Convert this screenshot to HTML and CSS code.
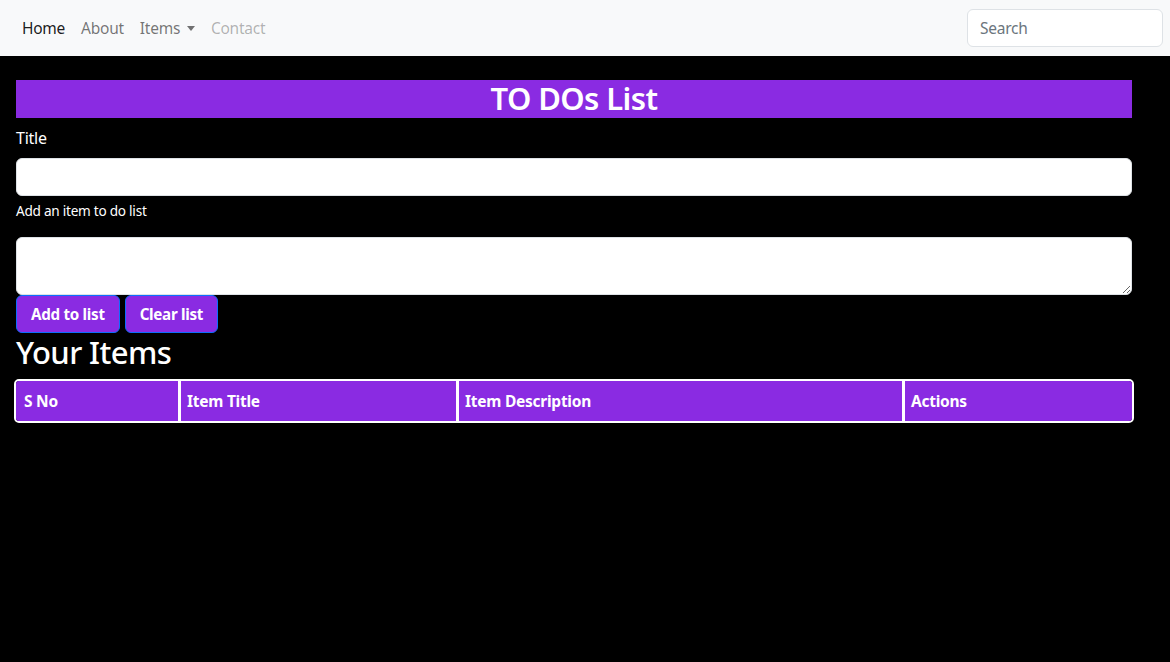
FILE: index.html
```html
<!DOCTYPE html>
<html lang="en">
<head>
<meta charset="utf-8">
<title>TO DOs List</title>
<link rel="stylesheet" href="styles.css">
</head>
<body>
<nav class="navbar">
  <ul class="nav-links">
    <li><a class="nav-link active" href="#">Home</a></li>
    <li><a class="nav-link" href="#">About</a></li>
    <li><a class="nav-link dropdown" href="#">Items <span class="caret"></span></a></li>
    <li><a class="nav-link disabled" href="#">Contact</a></li>
  </ul>
  <input class="search" type="search" placeholder="Search">
</nav>
<main class="page">
  <h2 class="banner">TO DOs List</h2>
  <label class="form-label" for="title">Title</label>
  <input class="form-control" id="title" type="text">
  <div class="form-text">Add an item to do list</div>
  <textarea class="form-control area" id="desc"></textarea>
  <div class="buttons">
    <button class="btn">Add to list</button>
    <button class="btn">Clear list</button>
  </div>
  <h2 class="section-title">Your Items</h2>
  <table class="items">
    <thead>
      <tr>
        <th class="c1">S No</th>
        <th class="c2">Item Title</th>
        <th class="c3">Item Description</th>
        <th class="c4">Actions</th>
      </tr>
    </thead>
    <tbody></tbody>
  </table>
</main>
</body>
</html>
```

FILE: styles.css
```css
* { box-sizing: border-box; }
html, body { margin: 0; padding: 0; }
body {
  background: #000;
  color: #fff;
  font-family: "Noto Sans", "Open Sans", "Liberation Sans", sans-serif;
  font-size: 16px;
  line-height: 1.5;
  letter-spacing: -0.25px;
  height: 662px;
  overflow: hidden;
}
.navbar {
  height: 56px;
  background: #f8f9fa;
  display: flex;
  align-items: center;
  justify-content: space-between;
  padding: 0 7px 0 14px;
}
.nav-links {
  list-style: none;
  margin: 0;
  padding: 0;
  display: flex;
}
.nav-link {
  display: block;
  padding: 9px 8px 7px;
  text-decoration: none;
  color: rgba(0,0,0,.55);
  font-size: 15.5px;
}
.nav-link.active { color: rgba(0,0,0,.9); }
.nav-link.disabled { color: rgba(0,0,0,.3); }
.caret {
  display: inline-block;
  width: 0; height: 0;
  margin-left: 3px;
  vertical-align: 3px;
  border-top: 5px solid rgba(0,0,0,.55);
  border-left: 4.5px solid transparent;
  border-right: 4.5px solid transparent;
}
.search {
  width: 196px;
  height: 38px;
  border: 1px solid #dee2e6;
  border-radius: 6px;
  padding: 6px 12px;
  font-family: inherit;
  font-size: 15.5px;
  letter-spacing: -0.25px;
  color: #212529;
  background: #fff;
}
.search::placeholder { color: #6c757d; }
.page {
  width: 1116px;
  margin: 24px 0 0 16px;
}
h2 {
  font-size: 31px;
  font-weight: 600;
  letter-spacing: -0.6px;
  line-height: 38px;
  margin: 0 0 8px;
}
.banner {
  background: #8a2be2;
  text-align: center;
  line-height: 36px;
  padding-bottom: 2px;
}
.form-label {
  display: block;
  margin-bottom: 8px;
}
.form-control {
  display: block;
  width: 100%;
  height: 38px;
  border: 1px solid #dee2e6;
  border-radius: 6px;
  background: #fff;
  padding: 6px 12px;
  font-family: inherit;
  font-size: 16px;
}
.form-text {
  font-size: 13.6px;
  line-height: 21px;
  margin-top: 4px;
  margin-bottom: 16px;
}
.area {
  height: 58px;
  resize: vertical;
}
.buttons {
  display: flex;
  gap: 5px;
}
.btn {
  background: #8a2be2;
  color: #fff;
  border: 1px solid #0d6efd;
  border-radius: 6px;
  padding: 6px 14px;
  font-family: inherit;
  font-weight: 700;
  font-size: 15.2px;
  letter-spacing: -0.3px;
  line-height: 24px;
  height: 38px;
}
.section-title { margin-top: 0; font-weight: 500; }
.items {
  margin-left: -2px;
  width: 1120px;
  border-collapse: separate;
  border-spacing: 0;
  border: 2px solid #fff;
  border-radius: 5px;
  overflow: hidden;
}
.items th {
  background: #8a2be2;
  text-align: left;
  font-weight: 700;
  font-size: 15.5px;
  padding: 8px 6px;
  line-height: 24px;
  height: 40px;
  border-left: 3px solid #fff;
}
.items th.c1 { border-left: 0; width: 162px; padding-left: 8px; }
.items th.c2 { width: 278px; }
.items th.c3 { width: 446px; }
```
